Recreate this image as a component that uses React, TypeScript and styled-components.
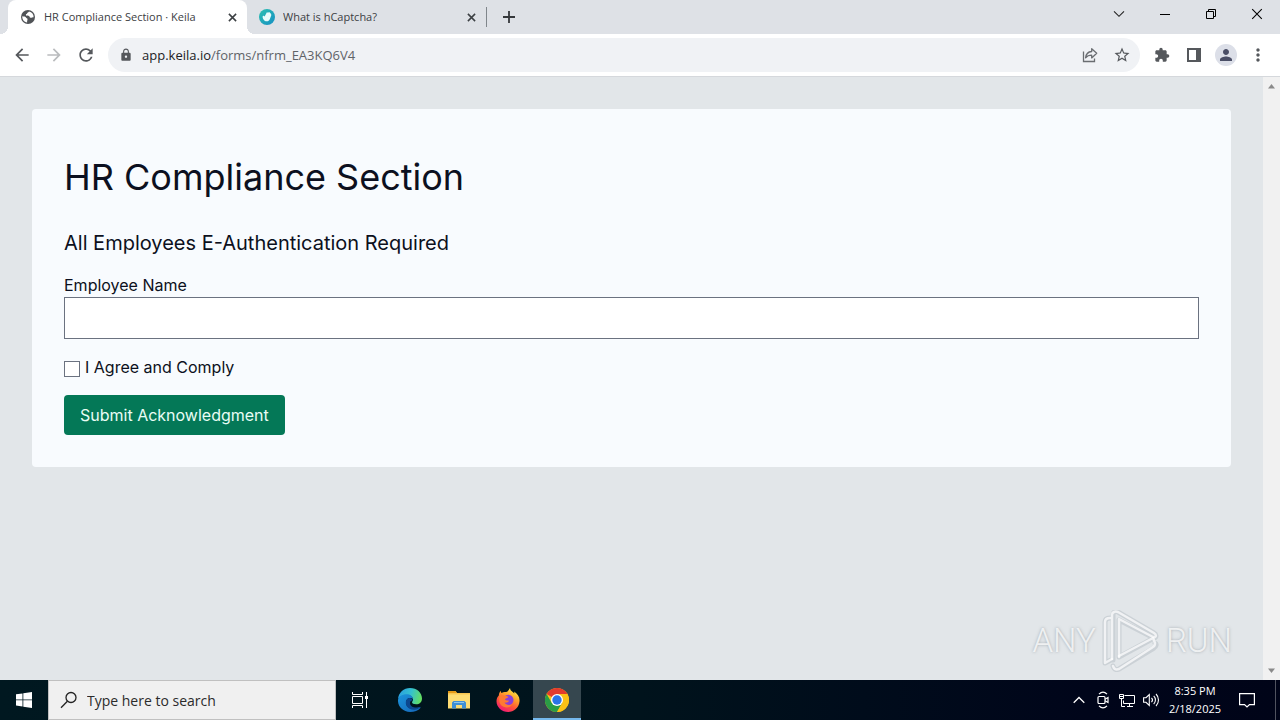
import React from 'react';
import styled, { createGlobalStyle } from 'styled-components';
import {
  MdArrowBack,
  MdArrowForward,
  MdExtension,
  MdLock,
  MdMoreVert,
  MdPerson,
  MdRefresh,
  MdStarBorder,
} from 'react-icons/md';

const GlobalStyle = createGlobalStyle`
  *, *::before, *::after { box-sizing: border-box; }
  body {
    margin: 0;
    font-family: "Open Sans", "Noto Sans", sans-serif;
    color: #202124;
  }
  button, input { font: inherit; color: inherit; }
  svg { display: block; flex: none; }
`;

const Screen = styled.div`
  display: flex;
  flex-direction: column;
  min-height: 100vh;
`;

/* Browser frame */

const TabStrip = styled.header`
  display: flex;
  height: 34px;
  padding-left: 8px;
  background: #dee1e6;
`;

const Tab = styled.div<{ $active?: boolean }>`
  position: relative;
  display: flex;
  align-items: center;
  gap: 8px;
  width: 239px;
  padding: 0 7px 0 12px;
  border-radius: 8px 8px 0 0;
  background: ${(p) => (p.$active ? '#ffffff' : 'transparent')};
  font-size: 11px;
  line-height: 16px;
  color: #3c4043;

  &::before, &::after {
    content: "";
    display: ${(p) => (p.$active ? 'block' : 'none')};
    position: absolute;
    bottom: 0;
    width: 8px;
    height: 8px;
  }
  &::before {
    left: -8px;
    background: radial-gradient(circle at 0 0, transparent 8px, #ffffff 8px);
  }
  &::after {
    right: -8px;
    background: radial-gradient(circle at 100% 0, transparent 8px, #ffffff 8px);
  }
`;

const TabTitle = styled.span`
  flex: 1;
  overflow: hidden;
  white-space: nowrap;
`;

const PlainButton = styled.button`
  display: flex;
  align-items: center;
  justify-content: center;
  padding: 0;
  border: 0;
  background: transparent;
`;

const TabClose = styled(PlainButton)`
  width: 16px;
  height: 16px;
`;

const TabDivider = styled.span`
  align-self: center;
  width: 1px;
  height: 20px;
  background: #80868b;
`;

const NewTab = styled(PlainButton)`
  align-self: center;
  width: 28px;
  height: 28px;
  margin-left: 8px;
`;

const WindowControls = styled.div`
  display: flex;
  height: 28px;
  margin-left: auto;
`;

const WindowButton = styled(PlainButton)`
  width: 46px;
`;

const Toolbar = styled.nav`
  display: flex;
  align-items: center;
  gap: 6px;
  height: 43px;
  padding: 0 6px;
  background: #ffffff;
  border-bottom: 1px solid #d5d8dc;
`;

const ButtonGroup = styled.div`
  display: flex;
`;

const ToolButton = styled(PlainButton)<{ $muted?: boolean }>`
  width: 32px;
  height: 32px;
  color: ${(p) => (p.$muted ? '#babcbe' : '#55585c')};
`;

const Avatar = styled.span`
  display: flex;
  align-items: center;
  justify-content: center;
  width: 22px;
  height: 22px;
  border-radius: 50%;
  background: #dcdfe8;
  color: #4a4e66;
`;

const AddressBar = styled.div`
  display: flex;
  flex: 1;
  align-items: center;
  height: 34px;
  padding: 0 2px 0 11px;
  border-radius: 17px;
  background: #f0f2f5;
  color: #55585c;
`;

const Address = styled.span`
  flex: 1;
  margin-left: 9px;
  font-size: 13px;
  line-height: 20px;
  color: #5f6368;
`;

const Host = styled.span`
  color: #202124;
`;

/* Page */

const Viewport = styled.div`
  display: flex;
  flex: 1;
  background: #e2e6e9;
`;

const Page = styled.main`
  position: relative;
  flex: 1;
  padding: 32px;
  font-family: Inter, "Liberation Sans", sans-serif;
  color: #0c1020;
`;

const Card = styled.form`
  display: flex;
  flex-direction: column;
  align-items: flex-start;
  padding: 32px;
  border-radius: 4px;
  background: #f8fbfe;
  font-size: 16px;
  line-height: 24px;
`;

const Title = styled.h1`
  margin: 16px 0 32px;
  font-size: 36px;
  line-height: 40px;
  font-weight: 400;
`;

const Subtitle = styled.h2`
  margin: 0 0 16px;
  font-size: 20px;
  line-height: 28px;
  font-weight: 400;
`;

const TextField = styled.input`
  width: 100%;
  height: 42px;
  padding: 8px 12px;
  border: 1px solid #6b7280;
  border-radius: 0;
  background: #ffffff;
`;

const CheckRow = styled.label`
  display: flex;
  align-items: center;
  gap: 5px;
  margin: 16px 0;
`;

const CheckBox = styled.input`
  appearance: none;
  width: 16px;
  height: 16px;
  margin: 4px 0 0;
  border: 1px solid #6b7280;
  background: #ffffff;

  &:checked { background: #047857; }
`;

const SubmitButton = styled.button`
  height: 40px;
  padding: 0 16px;
  border: 0;
  border-radius: 4px;
  background: #047857;
  color: #e9fdf5;
`;

const Watermark = styled.div`
  position: absolute;
  right: 31px;
  bottom: 8px;
  display: flex;
  align-items: center;
  gap: 6px;
  font-family: Roboto, "Liberation Sans", sans-serif;
  font-size: 33px;
  font-weight: 300;
  line-height: 60px;
  color: rgba(255, 255, 255, 0.75);
  text-shadow: 0 0 3px rgba(110, 120, 130, 0.55);
`;

const ScrollBar = styled.div`
  display: flex;
  flex-direction: column;
  justify-content: space-between;
  align-items: center;
  width: 17px;
  padding: 7px 0;
  background: #f1f1f1;
`;

/* Taskbar */

const TaskBar = styled.footer`
  display: flex;
  height: 40px;
  background: linear-gradient(90deg, #001820, #00131c 50%, #00051a 85%, #000418);
  color: #ffffff;
`;

const StartButton = styled(PlainButton)`
  width: 48px;
`;

const SearchBox = styled.label`
  display: flex;
  align-items: center;
  gap: 9px;
  width: 288px;
  padding: 0 11px;
  border: 1px solid #c0c0c0;
  background: #f0f0f0;
`;

const SearchInput = styled.input`
  flex: 1;
  min-width: 0;
  padding: 2px 0 0;
  border: 0;
  outline: 0;
  background: transparent;
  font-size: 14px;
  line-height: 20px;

  &::placeholder { color: #2b2b2b; opacity: 1; }
`;

const TaskItems = styled.div`
  display: flex;
  gap: 1px;
  margin-left: 2px;
`;

const TaskButton = styled(PlainButton)<{ $active?: boolean }>`
  width: 48px;
  background: ${(p) => (p.$active ? '#36474f' : 'transparent')};
  border-bottom: 2px solid ${(p) => (p.$active ? '#76b9ed' : 'transparent')};
  padding-top: 2px;
`;

const Tray = styled.div`
  display: flex;
  margin-left: auto;
`;

const TrayButton = styled(PlainButton)`
  width: 24px;
`;

const Clock = styled.time`
  display: flex;
  flex-direction: column;
  align-items: center;
  justify-content: center;
  width: 64px;
  font-size: 11px;
  line-height: 18px;
  white-space: nowrap;
`;

const NoticeButton = styled(PlainButton)`
  width: 40px;
`;

const ShowDesktop = styled(PlainButton)`
  width: 5px;
  margin-left: 8px;
  border-left: 1px solid #50535f;
`;

const Cross = ({ size, width, color }: { size: number; width: number; color: string }) => (
  <svg width={size} height={size} viewBox="0 0 10 10" stroke={color} strokeWidth={width} fill="none">
    <path d="M1 1 9 9M9 1 1 9" />
  </svg>
);

const Globe = () => (
  <svg width="16" height="16" viewBox="0 0 16 16">
    <circle cx="8" cy="8" r="7" fill="#505357" />
    <path d="M2.300 7.200c1.800.2 3.400.3 3.700 1.300.2.900 1.400.6 1.500 1.600.1 1.100-.5 1.700-.4 3.300C4.200 13 2 10.500 2.300 7.200ZM9 2.400c-.2 1-1.800.8-1.800 1.900 0 .9-1.500.6-1.300 1.700.2 1 2.500.3 3.200 1.100.6.700.4 1.600 1.500 1.700 1.200.1 1.800-.6 3-.6.2-2.700-1.600-5.200-4.600-5.800Z" fill="#fff" />
  </svg>
);

const Captcha = () => (
  <svg width="16" height="16" viewBox="0 0 16 16">
    <defs>
      <linearGradient id="captcha" x1="0" y1="0" x2="1" y2="1">
        <stop offset="0" stopColor="#2cc0b0" />
        <stop offset="1" stopColor="#168fc4" />
      </linearGradient>
    </defs>
    <circle cx="8" cy="8" r="8" fill="url(#captcha)" />
    <path d="M3.600 7.600c.2-.9 1.200-1 1.700-.4l.3.3 2-3.800c.5-.8 1.400-.4 1.200.3l.9-.8c.7-.3 1.200.2 1 .9.700-.3 1.200.3 1 1 .6.100.700.700.5 1.300l-1.300 3.500c-.7 1.900-2.400 2.900-4.300 2.300C4.700 11.700 3.500 9.600 3.600 7.600Z" fill="#e8fbfb" />
  </svg>
);

const Share = () => (
  <svg width="16" height="16" viewBox="0 0 16 16" fill="none" stroke="#6a6d71" strokeWidth="1.300">
    <path d="M1.500 4.500v10h11v-3" />
    <path d="M9.700 1.800v2.700C6 4.800 4 7 3.600 10.800 5.200 8.900 7 8.200 9.700 8.200v2.700l5-4.600Z" strokeLinejoin="round" />
  </svg>
);

const Triangle = ({ up }: { up?: boolean }) => (
  <svg width="7" height="5" viewBox="0 0 7 5" fill="#8a8a8a">
    <path d={up ? 'M3.500 0 7 4.500H0Z' : 'M0 .5h7L3.500 5Z'} />
  </svg>
);

const PlayMark = () => (
  <svg width="58" height="62" viewBox="0 0 58 62" fill="none">
    <g stroke="#7d8790" strokeOpacity=".22" strokeWidth="5" strokeLinejoin="round" strokeLinecap="round">
      <path d="M8 8c-3 0-5 1-5 4v41l6-3M11 50V5c0-3 2-4 5-3l36 21c2 1 3 4 0 5L17 10v37l35-19M11 56c1 4 4 4 6 3l35-21c2-1 3-4 1-5" />
    </g>
    <g stroke="#fff" strokeOpacity=".72" strokeWidth="2.500" strokeLinejoin="round" strokeLinecap="round">
      <path d="M8 8c-3 0-5 1-5 4v41l7-4" />
      <path d="M10 49V5c0-3 3-4 6-3l36 21c3 2 2 5-1 4L17 9v38" />
      <path d="M17 46 51 28l2 5c0 2 0 3-2 4L17 59c-3 1-5 0-6-3" />
    </g>
  </svg>
);

const Windows = () => (
  <svg width="16" height="16" viewBox="0 0 16 16" fill="#fff">
    <path d="M0 2.300 6.500 1.400V7.500H0ZM7.300 1.300 16 0V7.500H7.300ZM0 8.300H6.500V14.500L0 13.600ZM7.300 8.300H16V16L7.300 14.700Z" />
  </svg>
);

const Magnifier = () => (
  <svg width="18" height="18" viewBox="0 0 18 18" fill="none" stroke="#222" strokeWidth="1.300">
    <circle cx="11" cy="6.500" r="5" />
    <path d="M7.400 10.200 1 16.800" />
  </svg>
);

const TaskView = () => (
  <svg width="18" height="16" viewBox="0 0 18 16" fill="none" stroke="#fff" strokeWidth="1">
    <path d="M1.500 0v2.500h10V0M1.500 16v-2.500h10V16M1.500 4.500h10v7h-10ZM15.500 0v16" />
    <path d="M14 4h3v3h-3Z" fill="#fff" stroke="none" />
  </svg>
);

const Edge = () => (
  <svg width="24" height="24" viewBox="0 0 24 24">
    <defs>
      <linearGradient id="edgeTop" x1="0" y1=".4" x2="1" y2=".6">
        <stop offset="0" stopColor="#2a9fe0" />
        <stop offset=".5" stopColor="#35c1cf" />
        <stop offset="1" stopColor="#66e05c" />
      </linearGradient>
      <linearGradient id="edgeLow" x1="0" y1="0" x2="1" y2="1">
        <stop offset="0" stopColor="#1b94dc" />
        <stop offset="1" stopColor="#1566b8" />
      </linearGradient>
    </defs>
    <path d="M0 11C.6 4.600 5.800 0 12 0c7 0 12 4.800 12 10.500 0 3.600-2.600 5.800-5.800 5.800-2.700 0-4.200-1-4.200-2 0-.7 1-1.100 1-2.800C15 9 12.400 7 9 7 4.500 7 1 9 0 11Z" fill="url(#edgeTop)" />
    <path d="M0 12C.4 8.500 4 6.300 8.500 6.300c3.800 0 6.300 2 6.500 5-.5-.8-1.600-1.300-3-1.300-2.200 0-4 1.900-4 4.400 0 4 3.600 6.600 7.600 6.600 2.700 0 5-.9 6.300-1.700.4-.2.800.2.500.6C20.300 22.500 16.500 24 12 24 5 24-.4 18.500 0 12Z" fill="url(#edgeLow)" />
    <path d="M8.500 11.800c-2.500 5 1.800 10.400 8 9.900 2.300-.1 4.600-1.200 5.900-2.900-5 1.800-10.200.3-10.400-3.600 0-1.600.9-2.300 2.500-2.900-.4-2.900-4.600-3-6-.5Z" fill="#0c478f" />
  </svg>
);

const Folder = () => (
  <svg width="22" height="20" viewBox="0 0 22 20">
    <path d="M0 1h7.500L9 3h13v15H0Z" fill="#f6c552" />
    <path d="M0 1h7.500L9 3H0Z" fill="#e59a17" />
    <path d="M0 4.500h22v14H0Z" fill="#fddc73" />
    <path d="M4 18.500V12.500l1.500-1.500h11l1.500 1.500v6h-4V15H8v3.500Z" fill="#3f8fd4" />
    <path d="M6 12h10v1H6Z" fill="#8cc4ee" />
  </svg>
);

const Firefox = () => (
  <svg width="24" height="24" viewBox="0 0 24 24">
    <defs>
      <linearGradient id="fox" x1=".8" y1="0" x2=".25" y2="1">
        <stop offset="0" stopColor="#fff44f" />
        <stop offset=".35" stopColor="#ffa52a" />
        <stop offset=".65" stopColor="#ff5438" />
        <stop offset="1" stopColor="#f0157a" />
      </linearGradient>
    </defs>
    <path d="M2.800 7.500C3 5.600 3.700 4 4.700 2.800c0 1 .3 1.700.8 2.200C7 4 8.500 3.700 10 4c1.800 0 2.600-2 4-4 0 2 1.400 3 3 4.200.6.500 1 .9 1.300 1.400.1-.8 0-1.400-.2-2C21.500 5.700 24 9 23.500 13.500 23 19.500 18 24 12 24S.5 19.300.5 13.200c0-2.100.8-4.200 2.300-5.700Z" fill="url(#fox)" />
    <circle cx="12.300" cy="12" r="5.200" fill="#8a3fd8" />
    <path d="M3.500 8.500c2-1.600 4.300-1.500 5.700-.4 1.400-.2 2.600.1 3.300.8-1 1.300-3.300 1-3.500 2.700 1 1.400 3 .6 4 1.200-.8 1.800-2.800 2.200-4.400 1.800 1 2.200 4.800 3.300 7.700 1.300-1.400 3.300-5.300 4.400-8.700 2.800C4 17.500 2.400 13.500 3.500 8.500Z" fill="#ff7a32" />
  </svg>
);

const Chrome = () => (
  <svg width="24" height="24" viewBox="0 0 24 24">
    <circle cx="12" cy="12" r="12" fill="#fbc116" />
    <path d="M12 12 1.600 6A12 12 0 0 1 22.400 6Z" fill="#e33b2e" />
    <path d="M1.600 6A12 12 0 0 0 12 24l5.200-9L12 12 6.800 15Z" fill="#2a9d46" />
    <path d="M12 6h10.400A12 12 0 0 1 12 24l5.200-9Z" fill="#fbc116" />
    <circle cx="12" cy="12" r="6" fill="#fff" />
    <circle cx="12" cy="12" r="4.700" fill="#2b74e8" />
  </svg>
);

const Camera = () => (
  <svg width="14" height="18" viewBox="0 0 14 18" fill="none" stroke="#fff" strokeWidth="1.200">
    <path d="M3 3.200C5.500.7 8.500.7 11 3.200M3 14.800c2.500 2.500 5.500 2.500 8 0" />
    <rect x="2" y="5.500" width="7" height="7" rx="1" />
    <path d="M9 8.200 12 6.500v5L9 9.800" />
  </svg>
);

const Network = () => (
  <svg width="17" height="15" viewBox="0 0 17 15" fill="none" stroke="#fff">
    <path d="M5.500 2.500h10v8h-11v-3M8 13.500h6M10.500 10.500v3M.5 1.500h4v4h-4ZM2.500 5.500v8H6" />
    <path d="M1 3.500h3" />
  </svg>
);

const Volume = () => (
  <svg width="17" height="14" viewBox="0 0 17 14" fill="none" stroke="#fff" strokeWidth="1.100">
    <path d="M.6 4.700h2.400L6.300 1.500v11L3 9.300H.6ZM8.500 4.800c1.200 1.300 1.200 3.100 0 4.400M10.700 2.900c2.300 2.300 2.300 5.900 0 8.200M13 1c3.300 3.300 3.300 8.700 0 12" />
  </svg>
);

const Notice = () => (
  <svg width="16" height="16" viewBox="0 0 16 16" fill="none" stroke="#fff" strokeWidth="1.200">
    <path d="M.6 1.600h14.800v11H10.500L8 15l-2.500-2.400H.6Z" />
  </svg>
);

export default function App() {
  return (
    <Screen>
      <GlobalStyle />
      <TabStrip>
        <Tab $active>
          <Globe />
          <TabTitle>HR Compliance Section · Keila</TabTitle>
          <TabClose type="button" aria-label="Close tab"><Cross size={9} width={1.7} color="#3c4043" /></TabClose>
        </Tab>
        <Tab>
          <Captcha />
          <TabTitle>What is hCaptcha?</TabTitle>
          <TabClose type="button" aria-label="Close tab"><Cross size={9} width={1.7} color="#3c4043" /></TabClose>
        </Tab>
        <TabDivider />
        <NewTab type="button" aria-label="New tab">
          <svg width="12" height="12" viewBox="0 0 12 12" stroke="#35383b" strokeWidth="1.800"><path d="M6 0v12M0 6h12" /></svg>
        </NewTab>
        <WindowControls>
          <WindowButton type="button" aria-label="Search tabs">
            <svg width="12" height="8" viewBox="0 0 12 8" fill="none" stroke="#222" strokeWidth="1.100"><path d="M1 1.300 6 6.300l5-5" /></svg>
          </WindowButton>
          <WindowButton type="button" aria-label="Minimize">
            <svg width="10" height="1" viewBox="0 0 10 1"><path d="M0 0h10v1H0Z" /></svg>
          </WindowButton>
          <WindowButton type="button" aria-label="Restore">
            <svg width="10" height="10" viewBox="0 0 10 10" fill="none" stroke="#000"><path d="M.5 2.500h7v7h-7ZM2.500 2.500v-2h7v7h-2" /></svg>
          </WindowButton>
          <WindowButton type="button" aria-label="Close"><Cross size={12} width={0.9} color="#000" /></WindowButton>
        </WindowControls>
      </TabStrip>

      <Toolbar>
        <ButtonGroup>
          <ToolButton type="button" aria-label="Back"><MdArrowBack size={20} /></ToolButton>
          <ToolButton type="button" aria-label="Forward" $muted><MdArrowForward size={20} /></ToolButton>
          <ToolButton type="button" aria-label="Reload"><MdRefresh size={20} /></ToolButton>
        </ButtonGroup>
        <AddressBar>
          <MdLock size={14} />
          <Address><Host>app.keila.io</Host>/forms/nfrm_EA3KQ6V4</Address>
          <ToolButton type="button" aria-label="Share"><Share /></ToolButton>
          <ToolButton type="button" aria-label="Bookmark"><MdStarBorder size={18} /></ToolButton>
        </AddressBar>
        <ButtonGroup>
          <ToolButton type="button" aria-label="Extensions"><MdExtension size={16} /></ToolButton>
          <ToolButton type="button" aria-label="Side panel">
            <svg width="14" height="14" viewBox="0 0 14 14"><path d="M0 0h14v14H0ZM2 2v10h7V2Z" fill="currentColor" fillRule="evenodd" /></svg>
          </ToolButton>
          <ToolButton type="button" aria-label="Profile"><Avatar><MdPerson size={18} /></Avatar></ToolButton>
          <ToolButton type="button" aria-label="Menu"><MdMoreVert size={20} /></ToolButton>
        </ButtonGroup>
      </Toolbar>

      <Viewport>
        <Page>
          <Card onSubmit={(e) => e.preventDefault()}>
            <Title>HR Compliance Section</Title>
            <Subtitle>All Employees E-Authentication Required</Subtitle>
            <label htmlFor="employee">Employee Name</label>
            <TextField id="employee" type="text" />
            <CheckRow>
              <CheckBox type="checkbox" />
              I Agree and Comply
            </CheckRow>
            <SubmitButton type="submit">Submit Acknowledgment</SubmitButton>
          </Card>
          <Watermark>
            <span>ANY</span>
            <PlayMark />
            <span>RUN</span>
          </Watermark>
        </Page>
        <ScrollBar>
          <Triangle up />
          <Triangle />
        </ScrollBar>
      </Viewport>

      <TaskBar>
        <StartButton type="button" aria-label="Start"><Windows /></StartButton>
        <SearchBox>
          <Magnifier />
          <SearchInput type="text" placeholder="Type here to search" aria-label="Search" />
        </SearchBox>
        <TaskButton type="button" aria-label="Task view"><TaskView /></TaskButton>
        <TaskItems>
          <TaskButton type="button" aria-label="Edge"><Edge /></TaskButton>
          <TaskButton type="button" aria-label="File Explorer"><Folder /></TaskButton>
          <TaskButton type="button" aria-label="Firefox"><Firefox /></TaskButton>
          <TaskButton type="button" aria-label="Chrome" $active><Chrome /></TaskButton>
        </TaskItems>
        <Tray>
          <TrayButton type="button" aria-label="Hidden icons">
            <svg width="12" height="8" viewBox="0 0 12 8" fill="none" stroke="#fff" strokeWidth="1.300"><path d="M.7 6.800 6 1.500l5.300 5.300" /></svg>
          </TrayButton>
          <TrayButton type="button" aria-label="Meet now"><Camera /></TrayButton>
          <TrayButton type="button" aria-label="Network"><Network /></TrayButton>
          <TrayButton type="button" aria-label="Volume"><Volume /></TrayButton>
          <Clock>
            <span>8:35 PM</span>
            <span>2/18/2025</span>
          </Clock>
          <NoticeButton type="button" aria-label="Notifications"><Notice /></NoticeButton>
          <ShowDesktop type="button" aria-label="Show desktop" />
        </Tray>
      </TaskBar>
    </Screen>
  );
}
